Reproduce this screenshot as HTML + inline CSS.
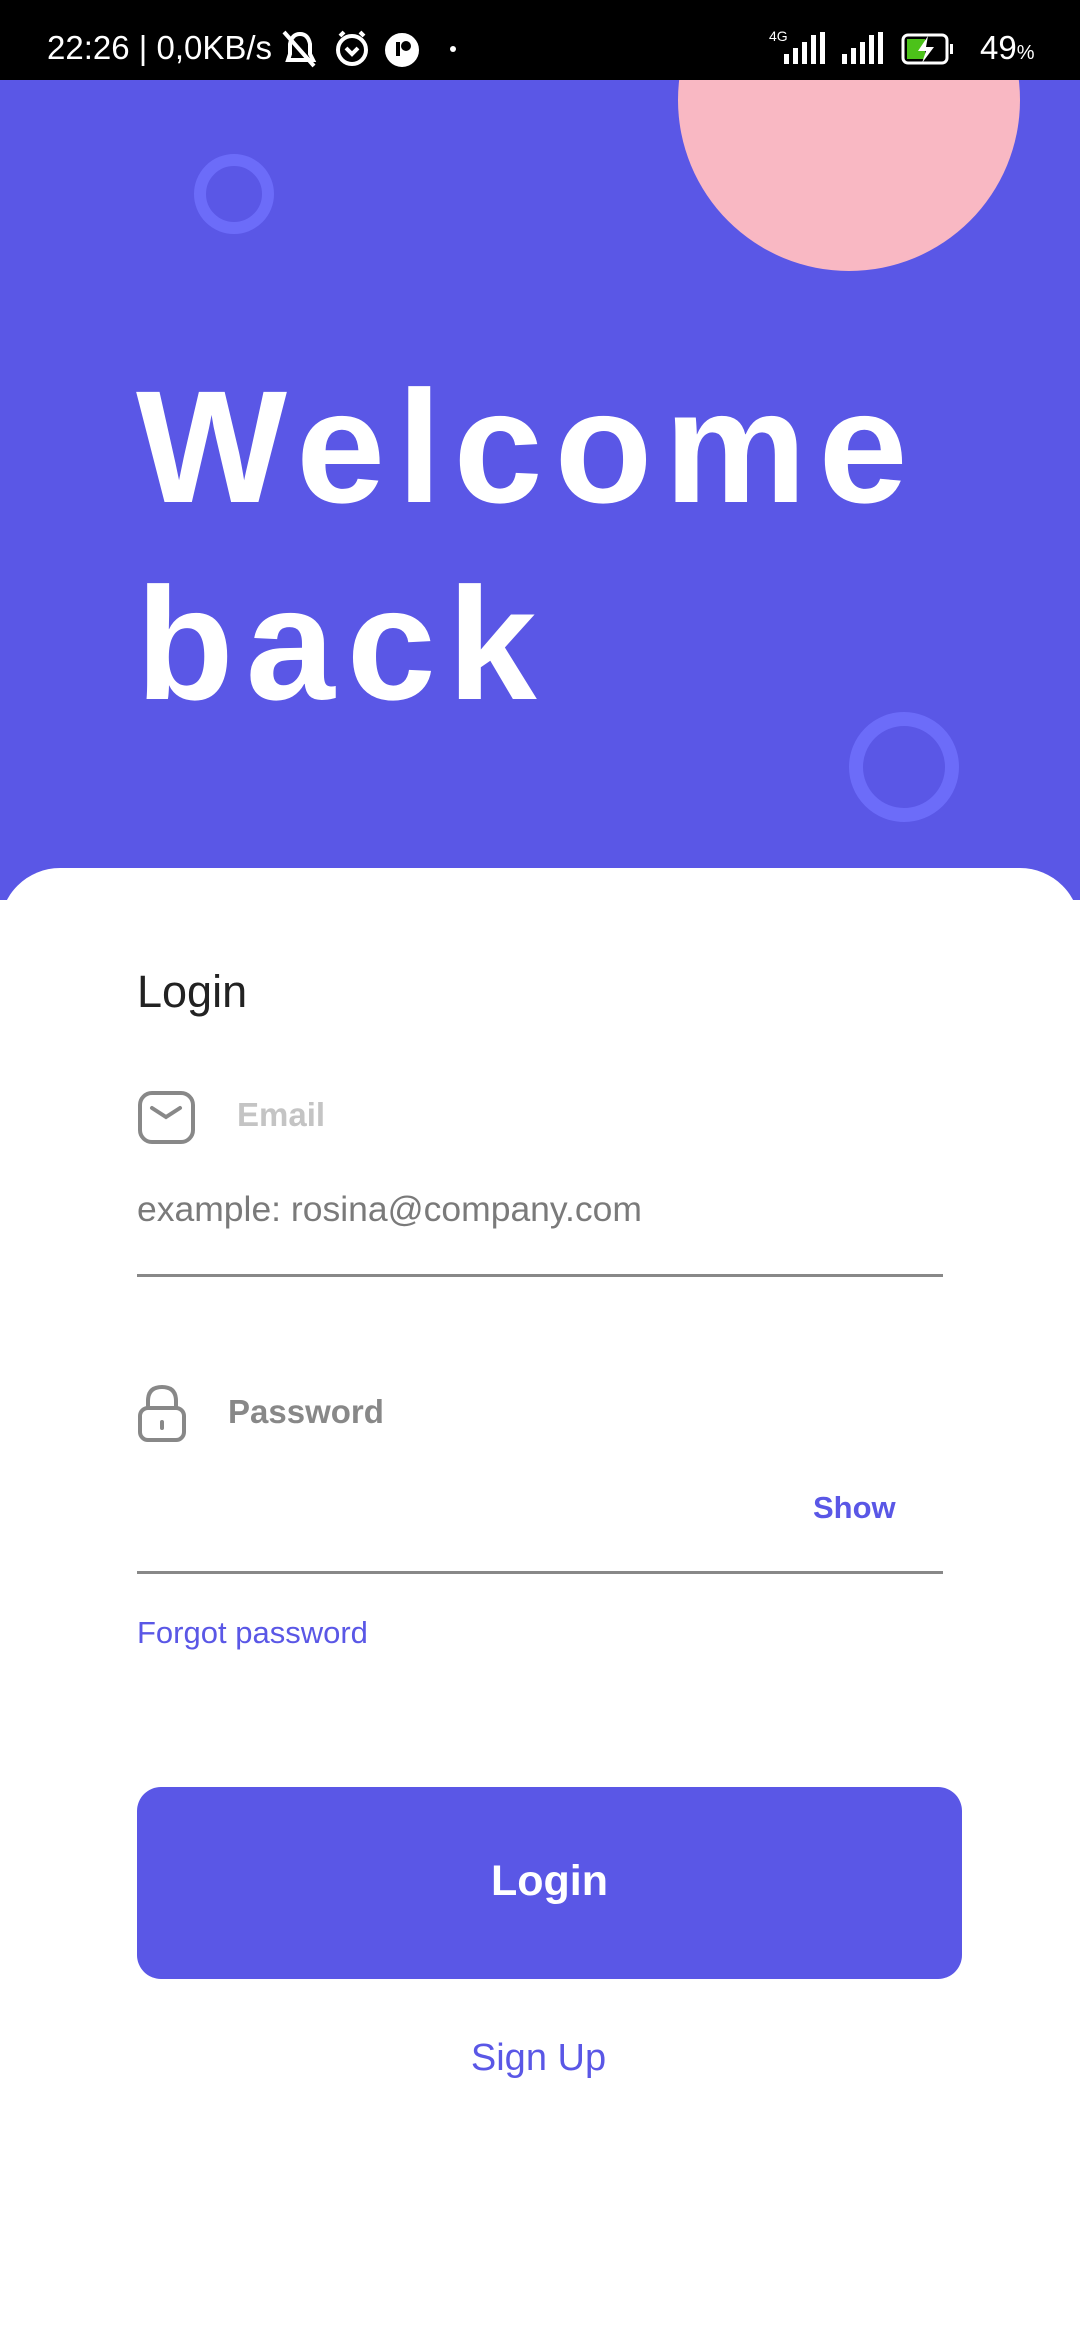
<!DOCTYPE html>
<html><head><meta charset="utf-8"><style>
*{margin:0;padding:0;box-sizing:border-box}
body{width:1080px;height:2340px;overflow:hidden;background:#fff;font-family:"Liberation Sans",sans-serif;position:relative}
.a{position:absolute}
#sb{left:0;top:0;width:1080px;height:80px;background:#000;color:#fff}
#hero{left:0;top:80px;width:1080px;height:820px;background:#5a57e6;overflow:hidden}
.t{white-space:nowrap}
</style></head><body>
<div id="hero" class="a">
  <div class="a" style="left:678px;top:-151px;width:342px;height:342px;border-radius:50%;background:#f9b8c3"></div>
  <div class="a" style="left:194px;top:74px;width:80px;height:80px;border-radius:50%;border:12px solid #6c6cf9"></div>
  <div class="a" style="left:849px;top:632px;width:110px;height:110px;border-radius:50%;border:14px solid #6c6cf9"></div>
  <div class="a t" style="left:136px;top:268px;font-size:160px;font-weight:bold;color:#fff;line-height:197px;letter-spacing:12px">Welcome<br>back</div>
</div>
<div class="a" style="left:0;top:868px;width:1080px;height:1472px;background:#fff;border-radius:60px 60px 0 0"></div>
<div id="sb" class="a">
  <div class="a t" style="left:47px;top:28px;font-size:33px;line-height:40px">22:26 | 0,0KB/s</div>
  <svg class="a" style="left:280px;top:28px" width="150" height="42" viewBox="0 0 150 42" fill="none" stroke="#fff" stroke-width="4">
    <path d="M8 32 L10 26 L10 16 Q12 6 20 6 Q28 6 30 16 L30 26 L33 32 Z M4 4 L34 38"/>
    <circle cx="72" cy="22" r="14"/><path d="M66 20 L72 26 L78 20 M60 8 L64 4 M84 8 L80 4"/>
    <circle cx="122" cy="22" r="15" fill="#fff"/><circle cx="126" cy="18" r="5" fill="#000" stroke="none"/><rect x="116" y="14" width="4" height="14" fill="#000" stroke="none"/>
  </svg>
  <div class="a" style="left:450px;top:46px;width:6px;height:6px;border-radius:50%;background:#fff"></div>
  <div class="a t" style="left:769px;top:28px;font-size:14px">4G</div>
  <svg class="a" style="left:762px;top:30px" width="270" height="40" viewBox="0 0 270 40" fill="#fff">
    <rect x="22" y="24" width="5" height="10"/><rect x="31" y="18" width="5" height="16"/><rect x="40" y="12" width="5" height="22"/><rect x="49" y="5" width="5" height="29"/><rect x="58" y="2" width="5" height="32"/>
    <rect x="80" y="24" width="5" height="10"/><rect x="89" y="18" width="5" height="16"/><rect x="98" y="12" width="5" height="22"/><rect x="107" y="5" width="5" height="29"/><rect x="116" y="2" width="5" height="32"/>
    <rect x="141" y="5" width="44" height="28" rx="5" fill="none" stroke="#fff" stroke-width="3"/><rect x="145" y="9" width="18" height="20" fill="#4cc21a"/><path d="M166 6 L156 21 L164 21 L160 33 L172 17 L164 17 Z"/><rect x="188" y="14" width="3" height="10"/>
  </svg>
  <div class="a t" style="left:980px;top:28px;font-size:33px;line-height:40px">49<span style="font-size:20px">%</span></div>
</div>
<div class="a t" style="left:137px;top:966px;font-size:45px;color:#222">Login</div>
<svg class="a" style="left:137px;top:1090px" width="60" height="56" viewBox="0 0 60 56" fill="none" stroke="#888" stroke-width="4"><rect x="3" y="3" width="53" height="49" rx="12"/><path d="M15 18 L29 27 L43 18" stroke-linecap="round"/></svg>
<div class="a t" style="left:237px;top:1096px;font-size:33px;font-weight:bold;color:#c4c4c4">Email</div>
<div class="a t" style="left:137px;top:1189px;font-size:35.5px;color:#7a7a7a">example: rosina@company.com</div>
<div class="a" style="left:137px;top:1274px;width:806px;height:3px;background:#888"></div>
<svg class="a" style="left:137px;top:1384px" width="52" height="60" viewBox="0 0 52 60" fill="none" stroke="#888" stroke-width="4"><rect x="3" y="24" width="44" height="32" rx="8"/><path d="M11 24 L11 17 Q11 3 25 3 Q39 3 39 17 L39 24"/><path d="M25 38 L25 44" stroke-linecap="round"/></svg>
<div class="a t" style="left:228px;top:1393px;font-size:33px;font-weight:bold;color:#888">Password</div>
<div class="a t" style="left:813px;top:1490px;font-size:31px;font-weight:bold;color:#5a57e6">Show</div>
<div class="a" style="left:137px;top:1571px;width:806px;height:3px;background:#888"></div>
<div class="a t" style="left:137px;top:1615px;font-size:31px;color:#5a57e6">Forgot password</div>
<div class="a" style="left:137px;top:1787px;width:825px;height:192px;border-radius:24px;background:#5a57e6"></div>
<div class="a t" style="left:137px;top:1857px;width:825px;text-align:center;font-size:43px;font-weight:bold;color:#fff">Login</div>
<div class="a t" style="left:0;top:2037px;width:1077px;text-align:center;font-size:38px;color:#5a57e6">Sign Up</div>
</body></html>
